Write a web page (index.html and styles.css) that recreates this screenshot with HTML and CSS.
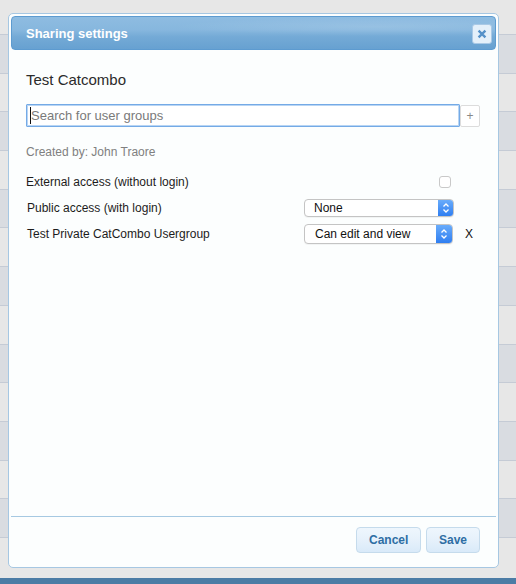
FILE: index.html
```html
<!DOCTYPE html>
<html>
<head>
<meta charset="utf-8">
<link rel="stylesheet" href="styles.css">
</head>
<body>
<div class="page">
  <div class="bg-top"></div>
  <div class="bg-row dark"></div>
  <div class="bg-row"></div>
  <div class="bg-row dark"></div>
  <div class="bg-row"></div>
  <div class="bg-row dark"></div>
  <div class="bg-row"></div>
  <div class="bg-row dark"></div>
  <div class="bg-row"></div>
  <div class="bg-row dark"></div>
  <div class="bg-row"></div>
  <div class="bg-row dark"></div>
  <div class="bg-row"></div>
  <div class="bg-row dark"></div>
  <div class="bg-row last"></div>
  <div class="bottom-bar"></div>
</div>

<div class="dialog">
  <div class="titlebar">
    <span class="title">Sharing settings</span>
    <span class="close">
      <svg width="20" height="20" viewBox="0 0 20 20"><path d="M6.2 6.2 L13.8 13.8 M13.8 6.2 L6.2 13.8" stroke="#5491c9" stroke-width="2.6" stroke-linecap="butt" fill="none"/></svg>
    </span>
  </div>
  <div class="content">
    <div class="heading">Test Catcombo</div>
    <div class="search-row">
      <div class="search"><span class="caret"></span><span class="placeholder">Search for user groups</span></div>
      <div class="plus">+</div>
    </div>
    <div class="created">Created by: John Traore</div>
    <div class="row r1">
      <span class="label">External access (without login)</span>
      <span class="ctrl"><span class="checkbox"></span></span>
      <span class="del"></span>
    </div>
    <div class="row r2">
      <span class="label l2">Public access (with login)</span>
      <span class="ctrl"><span class="select s1"><span class="sel-text">None</span><span class="stepper"><svg width="8" height="12" viewBox="0 0 8 12"><path d="M1.5 4.5 L4 2 L6.5 4.5 M1.5 7.5 L4 10 L6.5 7.5" stroke="#fff" stroke-width="1.3" fill="none"/></svg></span></span></span>
      <span class="del"></span>
    </div>
    <div class="row r3">
      <span class="label l3">Test Private CatCombo Usergroup</span>
      <span class="ctrl"><span class="select s2"><span class="sel-text">Can edit and view</span><span class="stepper"><svg width="8" height="12" viewBox="0 0 8 12"><path d="M1.5 4.5 L4 2 L6.5 4.5 M1.5 7.5 L4 10 L6.5 7.5" stroke="#fff" stroke-width="1.3" fill="none"/></svg></span></span></span>
      <span class="del">X</span>
    </div>
  </div>
  <div class="buttonpane">
    <button class="btn cancel">Cancel</button>
    <button class="btn save">Save</button>
  </div>
</div>
</body>
</html>
```

FILE: styles.css
```css
html, body {
  margin: 0;
  padding: 0;
}
body {
  width: 516px;
  height: 584px;
  overflow: hidden;
  font-family: "Liberation Sans", Arial, sans-serif;
  background: #e6e6e6;
}
.page {
  display: flex;
  flex-direction: column;
  height: 584px;
}
.bg-top {
  height: 34px;
  background: #e7e7e7;
  flex: none;
}
.bg-row {
  height: 37.7px;
  border-top: 1px solid #c5cbd5;
  background: #e7e7e7;
  flex: none;
}
.bg-row.dark {
  background: #d9dce1;
}
.bg-row.last {
  flex: 1;
  height: auto;
}
.bottom-bar {
  height: 6px;
  background: #4c7ca5;
  flex: none;
}

.dialog {
  position: absolute;
  left: 8px;
  top: 13px;
  width: 485px;
  height: 549px;
  border: 1px solid #a6c7e2;
  border-radius: 5px;
  background: #fcfefe;
  padding: 2px;
  display: flex;
  flex-direction: column;
}
.titlebar {
  height: 32px;
  flex: none;
  border: 1px solid #5d9bd0;
  border-radius: 4px;
  background:
    radial-gradient(ellipse 60% 40% at 75% 30%, rgba(255,255,255,0.12), rgba(255,255,255,0) 70%),
    linear-gradient(to bottom, #8ebce1 0%, #87b7de 40%, #74aad6 62%, #67a1d1 100%);
  display: flex;
  align-items: center;
  padding: 0 3px 0 14px;
}
.title {
  flex: 1;
  color: #fff;
  font-weight: bold;
  font-size: 13px;
  padding-top: 1px;
}
.close {
  width: 18px;
  height: 18px;
  border: 1px solid #a9c9e6;
  border-radius: 3px;
  background: #e4f0fa;
  display: flex;
  align-items: center;
  justify-content: center;
  margin-top: 1px;
}
.close svg {
  width: 18px;
  height: 18px;
}

.content {
  flex: 1;
  padding: 0 15px;
  color: #222;
  font-size: 12px;
}
.heading {
  font-size: 15px;
  line-height: 18px;
  margin-top: 21px;
  color: #2b2b2b;
}
.search-row {
  display: flex;
  align-items: center;
  margin-top: 14px;
  height: 25px;
}
.search {
  width: 429px;
  height: 21px;
  border: 1px solid #74aae6;
  box-shadow: inset 0 0 0 1px #b8d5f4;
  border-radius: 1px;
  background: #fff;
  display: flex;
  align-items: center;
  padding-left: 3px;
  flex: none;
}
.caret {
  width: 1px;
  height: 17px;
  background: #111;
}
.placeholder {
  color: #7a7a7a;
  font-size: 13px;
}
.plus {
  width: 18px;
  height: 20px;
  border: 1px solid #dcdcdc;
  border-radius: 2px;
  background: #fff;
  color: #888;
  font-size: 12px;
  display: flex;
  align-items: center;
  justify-content: center;
}
.created {
  color: #808080;
  font-size: 12px;
  line-height: 15px;
  margin-top: 17px;
}
.row {
  display: flex;
  align-items: center;
}
.r1 { height: 24px; margin-top: 10px; }
.r2 { height: 28px; }
.r3 { height: 24px; }
.label {
  flex: 1;
  color: #1c1c1c;
}
.l2, .l3 { padding-left: 1px; }
.ctrl {
  width: 150px;
  flex: none;
  display: flex;
  justify-content: flex-end;
}
.checkbox {
  width: 10px;
  height: 10px;
  border: 1px solid #c9c9c9;
  border-radius: 3px;
  background: #fff;
  margin-right: 3px;
}
.select {
  width: 148px;
  border: 1px solid #c4c4c4;
  border-radius: 4px;
  background: #fff;
  display: flex;
  align-items: stretch;
  overflow: hidden;
  box-shadow: 0 1px 0 rgba(0,0,0,0.04);
}
.s1 { height: 16px; }
.s2 { height: 18px; margin-right: 1px; }
.sel-text {
  flex: 1;
  padding-left: 9px;
  font-size: 12px;
  color: #111;
  display: flex;
  align-items: center;
}
.s2 .sel-text { padding-left: 10px; }
.stepper {
  width: 15px;
  background: linear-gradient(to bottom, #69acfb, #2f7ef1);
  display: flex;
  align-items: center;
  justify-content: center;
}
.s2 .stepper { width: 16px; }
.del {
  width: 27px;
  flex: none;
  font-size: 12px;
  color: #111;
  padding-left: 11px;
  box-sizing: border-box;
}

.buttonpane {
  flex: none;
  height: 38px;
  border-top: 1px solid #a6c9e2;
  padding: 10px 16px 0 0;
  display: flex;
  justify-content: flex-end;
  gap: 5px;
}
.btn {
  height: 26px;
  border: 1px solid #c5dbec;
  border-radius: 4px;
  background: linear-gradient(to bottom, #eef6fd 0%, #e6f1fb 50%, #d9eaf9 100%);
  color: #2e6ea4;
  font-family: "Liberation Sans", Arial, sans-serif;
  font-weight: bold;
  font-size: 12px;
  padding: 0 12px;
  margin: 0;
}
.cancel { width: 65px; }
.save { width: 54px; }
```
